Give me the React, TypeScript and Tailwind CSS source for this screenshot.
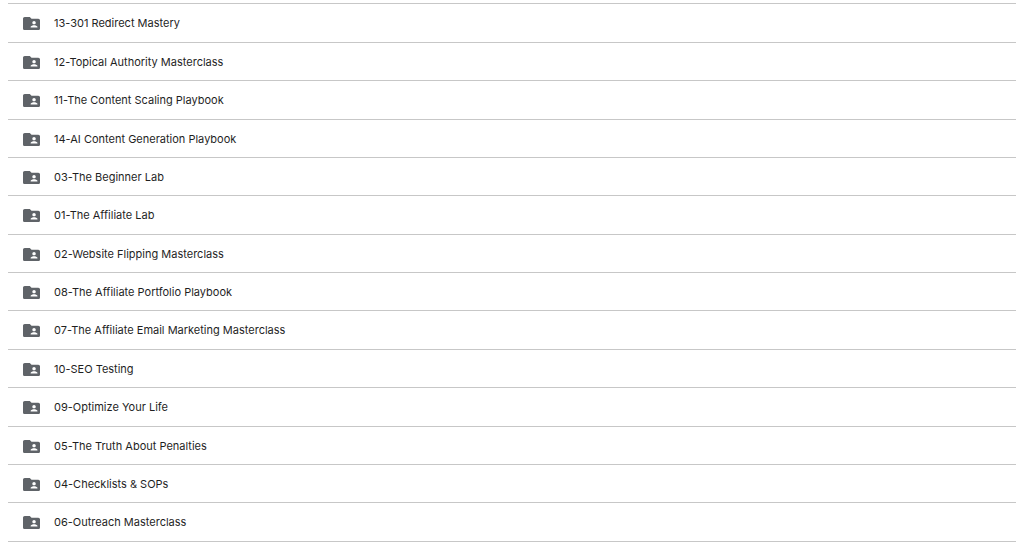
const folders: { name: string; roomy: boolean }[] = [
  { name: "13-301 Redirect Mastery", roomy: true },
  { name: "12-Topical Authority Masterclass", roomy: false },
  { name: "11-The Content Scaling Playbook", roomy: true },
  { name: "14-AI Content Generation Playbook", roomy: false },
  { name: "03-The Beginner Lab", roomy: false },
  { name: "01-The Affiliate Lab", roomy: true },
  { name: "02-Website Flipping Masterclass", roomy: false },
  { name: "08-The Affiliate Portfolio Playbook", roomy: false },
  { name: "07-The Affiliate Email Marketing Masterclass", roomy: true },
  { name: "10-SEO Testing", roomy: false },
  { name: "09-Optimize Your Life", roomy: true },
  { name: "05-The Truth About Penalties", roomy: false },
  { name: "04-Checklists & SOPs", roomy: false },
  { name: "06-Outreach Masterclass", roomy: true },
];

function SharedFolderIcon() {
  return (
    <svg viewBox="2 4 20 16" preserveAspectRatio="none" className="h-[13px] w-[17px] shrink-0 fill-[#5f6368]" aria-hidden="true">
      <path d="M20 6h-8l-2-2H4c-1.100 0-1.990.9-1.990 2L2 18c0 1.100.9 2 2 2h16c1.100 0 2-.9 2-2V8c0-1.100-.9-2-2-2zm-5 3c1.100 0 2 .9 2 2s-.9 2-2 2-2-.9-2-2 .9-2 2-2zm4 8h-8v-1c0-1.330 2.670-2 4-2s4 .67 4 2v1z" />
    </svg>
  );
}

export default function App() {
  return (
    <main className="min-h-screen bg-white pt-[3px] pl-2 font-['Inter',sans-serif]">
      <ul className="border-t border-[#c7c7c7]">
        {folders.map(({ name, roomy }) => (
          <li
            key={name}
            className={`flex items-start gap-3.5 border-b border-[#c7c7c7] pt-[13px] pl-[15px] ${roomy ? "h-[39px]" : "h-[38px]"}`}
          >
            <SharedFolderIcon />
            <span className="text-[11px] leading-3 text-[#1f1f1f]">{name}</span>
          </li>
        ))}
      </ul>
    </main>
  );
}
